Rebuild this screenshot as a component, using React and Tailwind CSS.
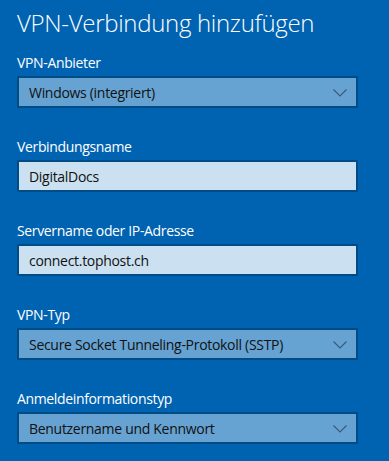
import React from "react";

function Chevron() {
  return (
    <svg width="14" height="8" viewBox="0 0 14 8" className="shrink-0 mt-[2px]">
      <path d="M0.5 0.5 L7 7 L13.5 0.5" fill="none" stroke="#3b5877" strokeWidth="1.1" />
    </svg>
  );
}

function Select({ label, value }) {
  return (
    <div className="flex flex-col">
      <div className="h-[20px] text-[14px] leading-[20px] tracking-[-0.35px] text-white">{label}</div>
      <div className="mt-[3px] w-[341px] h-[32px] border-2 border-[#024c85] bg-[#66a3d3] flex items-center justify-between pl-[10px] pr-[9px]">
        <span className="text-[14px] tracking-[-0.3px] text-[#111111]">{value}</span>
        <Chevron />
      </div>
    </div>
  );
}

function Input({ label, value }) {
  return (
    <div className="flex flex-col">
      <div className="h-[20px] text-[14px] leading-[20px] tracking-[-0.35px] text-white">{label}</div>
      <div className="mt-[3px] w-[341px] h-[32px] border-2 border-[#024c85] bg-[#cbe0f0] flex items-center pl-[10px]">
        <span className="text-[14px] tracking-[-0.3px] text-[#111111]">{value}</span>
      </div>
    </div>
  );
}

export default function App() {
  return (
    <div
      className="w-[389px] h-[461px] bg-[#0063b1] overflow-hidden pl-[17px] pt-[7px]"
      style={{ fontFamily: '"Open Sans", "Noto Sans", sans-serif' }}
    >
      <div className="h-[32px] text-[24px] leading-[32px] font-light tracking-[-0.3px] text-white">VPN-Verbindung hinzufügen</div>
      <div className="mt-[14px] flex flex-col gap-[29px]">
        <Select label="VPN-Anbieter" value="Windows (integriert)" />
        <Input label="Verbindungsname" value="DigitalDocs" />
        <Input label="Servername oder IP-Adresse" value="connect.tophost.ch" />
        <Select label="VPN-Typ" value="Secure Socket Tunneling-Protokoll (SSTP)" />
        <Select label="Anmeldeinformationstyp" value="Benutzername und Kennwort" />
      </div>
    </div>
  );
}
